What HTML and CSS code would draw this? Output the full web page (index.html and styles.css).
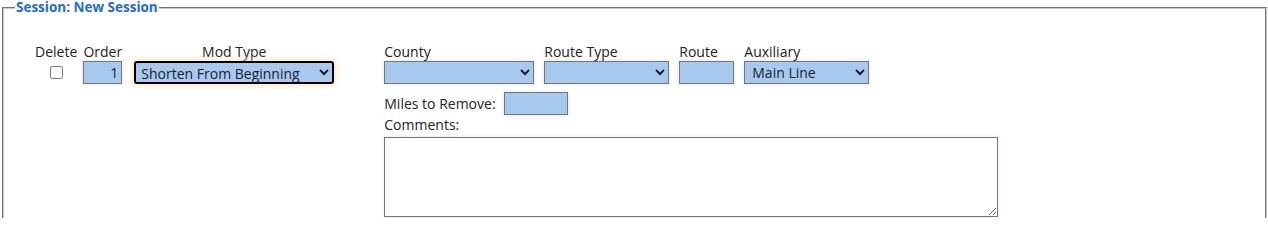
FILE: index.html
```html
<!DOCTYPE html>
<html>
<head>
<meta charset="utf-8">
<link rel="stylesheet" href="styles.css">
</head>
<body>
<fieldset class="session">
  <legend class="session-title">Session: New Session</legend>
  <div class="mod-row">
    <div class="mod-left">
      <div class="col col-delete">
        <span class="lbl">Delete</span>
        <input type="checkbox" class="chk">
      </div>
      <div class="col col-order">
        <span class="lbl">Order</span>
        <input type="text" class="fld fld-order" value="1">
      </div>
      <div class="col col-modtype">
        <span class="lbl">Mod Type</span>
        <select class="fld fld-modtype focused">
          <option>Shorten From Beginning</option>
        </select>
      </div>
    </div>
    <div class="mod-right">
      <div class="route-row">
        <div class="rcol">
          <span class="lbl">County</span>
          <select class="fld fld-county"><option></option></select>
        </div>
        <div class="rcol">
          <span class="lbl">Route Type</span>
          <select class="fld fld-rtype"><option></option></select>
        </div>
        <div class="rcol">
          <span class="lbl">Route</span>
          <input type="text" class="fld fld-route">
        </div>
        <div class="rcol">
          <span class="lbl">Auxiliary</span>
          <select class="fld fld-aux"><option>Main Line</option></select>
        </div>
      </div>
      <div class="miles-row">
        <span class="lbl">Miles to Remove:</span>
        <input type="text" class="fld fld-miles">
      </div>
      <div class="comments">
        <span class="lbl">Comments:</span>
        <textarea class="fld-comments"></textarea>
      </div>
    </div>
  </div>
</fieldset>
</body>
</html>
```

FILE: styles.css
```css
html, body {
  margin: 0;
  padding: 0;
  background: #fff;
}
body {
  font-family: "Open Sans", "Noto Sans", sans-serif;
  font-size: 14px;
  color: #222;
}
.session {
  margin: 0 1px 0 2px;
  border: 2px groove #c8c8c8;
  border-bottom: 0;
  padding: 27px 12px 1px 12px;
}
.session-title {
  color: #1a6ed0;
  font-weight: bold;
  font-size: 13.5px;
  padding: 0 1px;
  margin-left: -1px;
  line-height: 15px;
}
.mod-row {
  display: flex;
  align-items: flex-start;
}
.mod-left {
  display: flex;
  align-items: flex-start;
  margin-left: 19px;
  gap: 6px;
}
.col {
  display: flex;
  flex-direction: column;
  align-items: center;
}
.lbl {
  line-height: 19px;
  white-space: nowrap;
}
.chk {
  width: 13px;
  height: 13px;
  margin: 5px 0 0 0;
}
.fld {
  box-sizing: border-box;
  height: 23px;
  background: #a8c9ef;
  border: 1px solid #767676;
  border-radius: 0;
  font-family: "Open Sans", "Noto Sans", sans-serif;
  font-size: 14px;
  color: #1b1b2e;
  padding: 0 3px;
  box-shadow: 0 0 3px 1px rgba(0,0,0,0.08);
  margin: 0;
}
.fld-order {
  width: 39px;
  text-align: right;
}
.col-modtype {
  margin-left: 6px;
}
.fld-modtype {
  width: 200px;
}
.focused {
  border: 2px solid #000;
  border-radius: 3px;
  box-shadow: 0 0 4px 3px rgba(250, 215, 160, 0.45);
  padding-left: 1px;
}
.mod-right {
  margin-left: 50px;
  display: flex;
  flex-direction: column;
}
.route-row {
  display: flex;
  gap: 10px;
}
.rcol {
  display: flex;
  flex-direction: column;
  align-items: flex-start;
}
.fld-county { width: 150px; }
.fld-rtype { width: 125px; }
.fld-route { width: 55px; }
.fld-aux { width: 125px; }
.miles-row {
  display: flex;
  align-items: center;
  gap: 8px;
  margin-top: 8px;
}
.fld-miles {
  width: 64px;
}
.comments {
  display: flex;
  flex-direction: column;
  margin-top: 0;
}
.comments .lbl {
  margin-bottom: 3px;
}
.fld-comments {
  box-sizing: border-box;
  width: 614px;
  height: 80px;
  margin: 0;
  border: 1px solid #767676;
  background: #fff;
  box-shadow: 0 0 3px 1px rgba(0,0,0,0.06);
}
```
